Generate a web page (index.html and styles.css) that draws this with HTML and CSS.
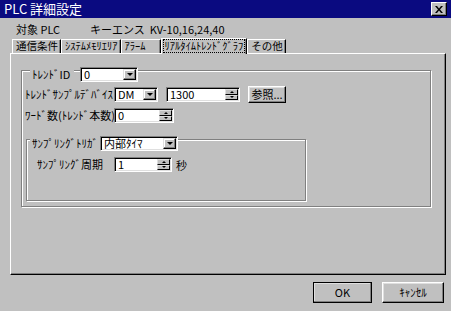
FILE: index.html
```html
<!DOCTYPE html>
<html lang="ja">
<head>
<meta charset="utf-8">
<link rel="stylesheet" href="styles.css">
</head>
<body>
<div class="win">
  <div class="title">
    <span class="title-text">PLC 詳細設定</span>
    <span class="close"><svg width="8" height="7" viewBox="0 0 8 7"><path d="M0 0h2l2 2.5L6 0h2L5 3.5 8 7H6L4 4.5 2 7H0l3-3.5z" fill="#000"/></svg></span>
  </div>
  <div class="target">
    <span class="t-label">対象 PLC</span>
    <span>キーエンス&nbsp;&nbsp;KV-10,16,24,40</span>
  </div>
  <div class="tabs">
    <div class="tab">通信条件</div>
    <div class="tab">ｼｽﾃﾑﾒﾓﾘｴﾘｱ</div>
    <div class="tab w3">ｱﾗｰﾑ</div>
    <div class="tab active"><span class="focus">ﾘｱﾙﾀｲﾑﾄﾚﾝﾄﾞｸﾞﾗﾌ</span></div>
    <div class="tab">その他</div>
  </div>
  <div class="panel">
    <div class="group g1">
      <div class="ghead">
        <span class="cap cap1">ﾄﾚﾝﾄﾞID</span>
        <div class="combo c-id"><span class="val">0</span><span class="dd"></span></div>
      </div>
      <div class="row r2">
        <span class="lbl l1">ﾄﾚﾝﾄﾞｻﾝﾌﾟﾙﾃﾞﾊﾞｲｽ</span>
        <div class="combo c-dm"><span class="val">DM</span><span class="dd"></span></div>
        <div class="spin s-addr"><span class="val">1300</span><span class="sp"><span class="up"></span><span class="down"></span></span></div>
        <button class="btn b-ref">参照...</button>
      </div>
      <div class="row r3">
        <span class="lbl l1">ﾜｰﾄﾞ数(ﾄﾚﾝﾄﾞ本数)</span>
        <div class="spin s-cnt"><span class="val">0</span><span class="sp"><span class="up"></span><span class="down"></span></span></div>
      </div>
      <div class="group g2">
        <div class="ghead">
          <span class="cap cap2">ｻﾝﾌﾟﾘﾝｸﾞﾄﾘｶﾞ</span>
          <div class="combo c-trig"><span class="val">内部ﾀｲﾏ</span><span class="dd"></span></div>
        </div>
        <div class="row r4">
          <span class="lbl l2">ｻﾝﾌﾟﾘﾝｸﾞ周期</span>
          <div class="spin s-per"><span class="val">1</span><span class="sp"><span class="up"></span><span class="down"></span></span></div>
          <span class="unit">秒</span>
        </div>
      </div>
    </div>
  </div>
  <div class="buttons">
    <button class="btn b-ok">OK</button>
    <button class="btn b-cancel">ｷｬﾝｾﾙ</button>
  </div>
</div>
</body>
</html>
```
FILE: styles.css
```css
* { box-sizing: border-box; margin: 0; padding: 0; }
html, body { width: 451px; height: 311px; overflow: hidden; }
body {
  background: #c0c0c0;
  font-family: "Noto Sans CJK JP", "Noto Sans", sans-serif;
  font-size: 11px;
  color: #000;
}
.win { width: 451px; height: 311px; display: flex; flex-direction: column; }

.title {
  height: 18px;
  background: #0a0a80;
  color: #fff;
  display: flex;
  align-items: center;
  justify-content: space-between;
  padding: 0 4px 0 4px;
  font-size: 13px;
  line-height: 18px;
}
.close {
  width: 16px; height: 14px;
  background: #c0c0c0;
  border: 1px solid; border-color: #fff #000 #000 #fff;
  box-shadow: inset -1px -1px 0 #808080;
  display: flex; align-items: center; justify-content: center;
}

.target {
  height: 14px;
  margin-top: 4px;
  padding-left: 16px;
  display: flex;
  align-items: center;
  line-height: 14px;
  white-space: nowrap;
}
.t-label { width: 74px; }

.tabs {
  margin-top: 3px;
  height: 14px;
  padding-left: 12px;
  display: flex;
  align-items: flex-end;
  position: relative;
  z-index: 1;
  font-size: 10.5px;
}
.tab {
  height: 14px;
  line-height: 12px;
  padding: 0 2px 0 3px;
  white-space: nowrap;
  border-left: 1px solid #fff;
  border-top: 1px solid #fff;
  border-right: 1px solid #000;
  box-shadow: inset -1px 0 0 #808080;
  background: #c0c0c0;
}
.w3 { width: 40px; }
.tab.active {
  height: 16px;
  margin-bottom: -1px;
  padding: 1px 2px 0 2px;
}
.focus {
  display: block;
  outline: 1px dotted #000;
  line-height: 12px;
  padding: 0 1px;
}

.panel {
  margin-left: 10px;
  width: 436px;
  height: 222px;
  border: 1px solid;
  border-color: #fff #000 #000 #fff;
  box-shadow: inset -1px -1px 0 #808080;
  padding: 16px 0 0 10px;
}

.group {
  border: 1px solid #808080;
  box-shadow: 1px 1px 0 #fff, inset 1px 1px 0 #fff;
}
.g1 { width: 410px; height: 137px; }
.g2 { width: 280px; height: 62px; margin: 16px 0 0 4px; }

.ghead {
  display: flex;
  align-items: center;
  height: 15px;
  margin-top: -4px;
}
.cap {
  background: #c0c0c0;
  padding: 0 2px;
  line-height: 13px;
  white-space: nowrap;
}
.cap1 { margin-left: 8px; width: 44px; }
.cap2 { margin-left: 3px; width: 70px; }
.c-id { margin-left: 6px; }

.row {
  display: flex;
  align-items: center;
  height: 15px;
  white-space: nowrap;
}
.r2 { margin-top: 5px; padding-left: 3px; }
.r3 { margin-top: 6px; padding-left: 3px; }
.r4 { margin-top: 6px; padding-left: 10px; }
.lbl { line-height: 15px; }
.l1 { width: 89px; }
.l2 { width: 77px; }

.combo, .spin {
  height: 15px;
  background: #fff;
  border: 1px solid;
  border-color: #808080 #fff #fff #808080;
  box-shadow: inset 1px 1px 0 #000, inset -1px -1px 0 #dfdfdf;
  padding: 1px;
  display: flex;
  align-items: stretch;
}
.val {
  flex: 1;
  padding-left: 2px;
  line-height: 11px;
  font-size: 11px;
  white-space: nowrap;
}
.c-id { width: 58px; }
.c-dm { width: 44px; }
.c-trig { width: 78px; }
.s-addr { width: 74px; margin-left: 8px; }
.s-cnt { width: 60px; }
.s-per { width: 58px; }

.dd {
  width: 13px;
  flex: none;
  background: #c0c0c0;
  border: 1px solid;
  border-color: #dfdfdf #000 #000 #dfdfdf;
  box-shadow: inset -1px -1px 0 #808080, inset 1px 1px 0 #fff;
  display: flex; align-items: center; justify-content: center;
}
.dd::after {
  content: "";
  border-left: 3px solid transparent;
  border-right: 3px solid transparent;
  border-top: 3px solid #000;
}
.sp { width: 13px; flex: none; display: flex; flex-direction: column; }
.up, .down {
  flex: 1;
  background: #c0c0c0;
  border: 1px solid;
  border-color: #dfdfdf #000 #000 #dfdfdf;
  display: flex; align-items: center; justify-content: center;
}
.up::after {
  content: "";
  border-left: 2px solid transparent;
  border-right: 2px solid transparent;
  border-bottom: 2px solid #000;
}
.down::after {
  content: "";
  border-left: 2px solid transparent;
  border-right: 2px solid transparent;
  border-top: 2px solid #000;
}

.btn {
  font-family: inherit;
  font-size: 11px;
  color: #000;
  background: #c0c0c0;
  border: 1px solid;
  border-color: #fff #000 #000 #fff;
  box-shadow: inset -1px -1px 0 #808080, inset 1px 1px 0 #dfdfdf;
  line-height: 13px;
}
.b-ref { width: 38px; height: 17px; margin-left: 8px; }
.unit { margin-left: 4px; }

.buttons {
  display: flex;
  justify-content: flex-end;
  gap: 10px;
  padding: 7px 7px 0 0;
}
.b-ok { width: 59px; height: 21px; outline: 1px solid #000; outline-offset: -1px; }
.b-cancel { width: 62px; height: 21px; }
```
